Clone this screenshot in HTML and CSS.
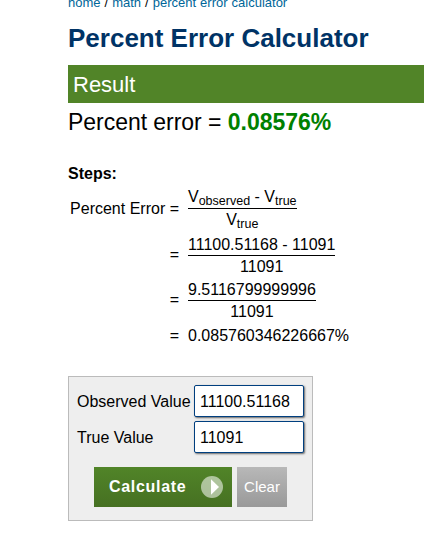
FILE: index.html
```html
<!DOCTYPE html>
<html lang="en">
<head>
<meta charset="utf-8">
<title>Percent Error Calculator</title>
<link rel="stylesheet" href="styles.css">
</head>
<body>
<main class="content">
  <nav class="crumbs"><a>home</a> / <a>math</a> / <a>percent error calculator</a></nav>
  <h1>Percent Error Calculator</h1>
  <h2 class="result-title">Result</h2>
  <p class="result"><span class="result-label">Percent error = </span><b>0.08576%</b></p>
  <p class="steps">Steps:</p>
  <div class="equation">
    <div class="row row-formula"><span class="lhs">Percent Error =</span>
      <div class="fraction"><div class="num">V<sub>observed</sub> - V<sub>true</sub></div><div class="den">V<sub>true</sub></div></div></div>
    <div class="row row-fraction"><span class="lhs">=</span>
      <div class="fraction"><div class="num">11100.51168 - 11091</div><div class="den">11091</div></div></div>
    <div class="row row-fraction"><span class="lhs">=</span>
      <div class="fraction"><div class="num">9.5116799999996</div><div class="den">11091</div></div></div>
    <div class="row row-value"><span class="lhs">=</span><span class="value">0.085760346226667%</span></div>
  </div>
  <form class="panel">
    <div class="field"><label for="observed">Observed Value</label><input id="observed" type="text" value="11100.51168"></div>
    <div class="field"><label for="true">True Value</label><input id="true" type="text" value="11091"></div>
    <div class="buttons">
      <button class="calculate" type="button"><span>Calculate</span><svg width="22" height="22" viewBox="0 0 22 22"><circle cx="11" cy="11" r="11" fill="#fff" fill-opacity=".55"/><path d="M10 3.2 18 11l-8 7.8z" fill="#fff"/></svg></button>
      <button class="clear" type="button">Clear</button>
    </div>
  </form>
</main>
</body>
</html>
```
FILE: styles.css
```css
* { box-sizing: border-box; }
html, body { margin: 0; overflow: hidden; }
body { height: 541px; background: #fff; color: #000; font: 16px/20px "Liberation Sans", Arial, sans-serif; }
.content { margin-left: 68px; }
.crumbs { height: 20px; margin-top: -8px; font-size: 13px; line-height: 22px; white-space: nowrap; word-spacing: .4px; }
.crumbs a { color: #069; }
h1 { margin: 10px 0 0; height: 32px; font-size: 26px; line-height: 32px; color: #003366; white-space: nowrap; }
.result-title { margin: 11px 0 0; height: 38px; padding-left: 5px; background: #518428; color: #fff; font-size: 22px; font-weight: 400; line-height: 39px; }
.result { margin: 5px 0 0; height: 28px; font-size: 23px; line-height: 28px; letter-spacing: -.04px; white-space: nowrap; }
.result b { color: green; }
.steps { margin: 28px 0 0; height: 20px; font-weight: 700; }
.equation { margin-top: 2px; }
.row { display: grid; grid-template-columns: 111px max-content; column-gap: 9px; }
.lhs { text-align: right; white-space: nowrap; }
.fraction { text-align: center; white-space: nowrap; }
.num { border-bottom: 1px solid #000; }
.row-formula { height: 49px; }
.row-formula .lhs { padding-top: 13px; }
.row-formula .num { height: 23px; line-height: 22px; }
.row-formula .den { line-height: 22px; }
.row-fraction { height: 45px; }
.row-fraction .lhs { padding-top: 10px; }
.row-fraction .num { height: 21px; }
.row-fraction .den { line-height: 21px; }
.row-value { height: 20px; padding-top: 1px; }
sub { font-size: 12.5px; line-height: 0; vertical-align: -3px; }
.panel { width: 245px; height: 145px; margin-top: 31px; padding: 8px; border: 1px solid #bbb; background: #eee; }
.field { display: grid; grid-template-columns: 117px 110px; height: 36px; line-height: 33px; white-space: nowrap; }
.field input { width: 110px; height: 32px; margin: 0; padding: 0 5px; border: 1px solid #003f7f; border-radius: 2px; background: #fff; box-shadow: 1px 1px 2px #666; color: #000; font: inherit; }
.buttons { display: flex; gap: 5px; padding: 10px 0 0 17px; }
button { height: 40px; margin: 0; padding: 0; border: 0; color: #fff; font: 15px "Liberation Sans", Arial, sans-serif; }
.calculate { display: flex; align-items: center; justify-content: space-between; width: 138px; padding: 0 9px 0 15px; background: linear-gradient(#518428, #467022); font-size: 16px; font-weight: 700; letter-spacing: .7px; }
.clear { width: 50px; padding-bottom: 2px; background: linear-gradient(#b8b8b8, #999); }
```
